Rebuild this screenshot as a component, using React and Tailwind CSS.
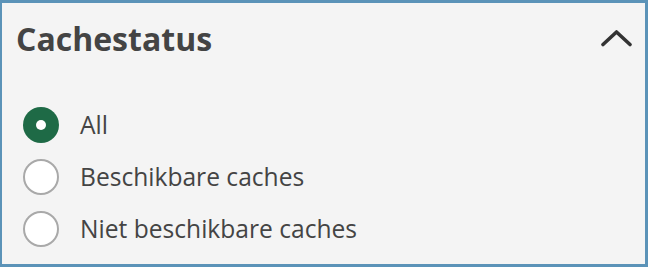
import React, { useState } from 'react';

const options = [
  { id: 'all', label: 'All' },
  { id: 'available', label: 'Beschikbare caches' },
  { id: 'unavailable', label: 'Niet beschikbare caches' },
];

const App = () => {
  const [selected, setSelected] = useState('all');
  const [open, setOpen] = useState(true);

  return (
    <div
      className="w-[648px] h-[267px] bg-[#f4f4f4] border-[3px] border-l-2 border-[#5b93b8] text-[#444444] overflow-hidden"
      style={{ fontFamily: '"Open Sans", "Noto Sans", sans-serif' }}
    >
      {/* Header */}
      <div className="flex justify-between pl-[14px] pr-[13px] pt-[14px] h-[96px] items-start">
        <h2 className="text-[32px] leading-[44px] font-bold text-[#444444]">Cachestatus</h2>
        <button onClick={() => setOpen(!open)} className="mt-[12px] p-0">
          <svg width="32" height="18" viewBox="0 0 32 18" fill="none">
            <path d="M3 15.5 L16.5 3 L30 15.5" stroke="#333333" strokeWidth="3.6" strokeLinecap="round" strokeLinejoin="round" />
          </svg>
        </button>
      </div>

      {/* Options */}
      {open && (
        <div className="flex flex-col pl-[21px]">
          {options.map(opt => {
            const checked = selected === opt.id;
            return (
              <label key={opt.id} className="flex items-center h-[52px] cursor-pointer" onClick={() => setSelected(opt.id)}>
                {checked ? (
                  <span className="w-9 h-9 rounded-full bg-[#1e6a46] flex items-center justify-center shrink-0">
                    <span className="w-[10px] h-[10px] rounded-full bg-white" />
                  </span>
                ) : (
                  <span className="w-9 h-9 rounded-full bg-white border-2 border-[#a9a9a9] shrink-0" />
                )}
                <span className="ml-[21px] text-[24.6px] leading-[32px] text-[#444444]">{opt.label}</span>
              </label>
            );
          })}
        </div>
      )}
    </div>
  );
};

export default App;
